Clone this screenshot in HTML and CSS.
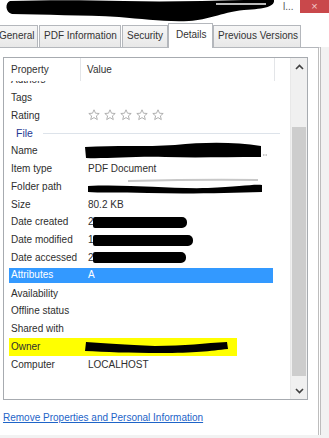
FILE: index.html
```html
<!DOCTYPE html>
<html lang="en">
<head>
    <meta charset="UTF-8">
    <title>Properties - Details</title>
    <link rel="stylesheet" href="styles.css">
</head>
<body>
    <div class="titlebar">
        <div class="title-text">
            <svg class="title-scribble" width="276" height="22" viewBox="0 0 276 22">
                <path d="M6 1 C40 0 80 0 120 1 C160 2 200 1 240 0 L270 0 C271 6 262 9 240 10 C215 13 205 20 185 21 C160 22 140 19 115 17 C80 15 40 15 8 14 C1 12 1 3 6 1 Z" fill="#000"/>
                <path d="M212 4 h50" stroke="#bbb" stroke-width="2"/>
            </svg>
        </div>
        <span class="title-rest">l...</span>
        <span class="close-btn">×</span>
    </div>

    <div class="tabs">
        <div class="tab tab-general">General</div>
        <div class="tab tab-pdf">PDF Information</div>
        <div class="tab tab-security">Security</div>
        <div class="tab tab-details active">Details</div>
        <div class="tab tab-previous">Previous Versions</div>
    </div>

    <div class="panel">
        <div class="listbox">
            <div class="list">
                <div class="list-header">
                    <div class="hcell hcell-prop">Property</div>
                    <div class="hcell hcell-value">Value</div>
                </div>
                <div class="viewport">
                    <div class="rows">
                        <div class="row"><span class="prop">Authors</span><span class="val"></span></div>
                        <div class="row"><span class="prop">Tags</span><span class="val"></span></div>
                        <div class="row">
                            <span class="prop">Rating</span>
                            <span class="val stars">
                                <svg width="80" height="12" viewBox="0 0 80 12">
                                    <g fill="none" stroke="#a8a8a8" stroke-width="0.9">
                                        <path d="M6 0.8 L7.5 4.2 L11.2 4.5 L8.4 6.9 L9.3 10.6 L6 8.6 L2.7 10.6 L3.6 6.9 L0.8 4.5 L4.5 4.2 Z"/>
                                        <path transform="translate(16 0)" d="M6 0.8 L7.5 4.2 L11.2 4.5 L8.4 6.9 L9.3 10.6 L6 8.6 L2.7 10.6 L3.6 6.9 L0.8 4.5 L4.5 4.2 Z"/>
                                        <path transform="translate(32 0)" d="M6 0.8 L7.5 4.2 L11.2 4.5 L8.4 6.9 L9.3 10.6 L6 8.6 L2.7 10.6 L3.6 6.9 L0.8 4.5 L4.5 4.2 Z"/>
                                        <path transform="translate(48 0)" d="M6 0.8 L7.5 4.2 L11.2 4.5 L8.4 6.9 L9.3 10.6 L6 8.6 L2.7 10.6 L3.6 6.9 L0.8 4.5 L4.5 4.2 Z"/>
                                        <path transform="translate(64 0)" d="M6 0.8 L7.5 4.2 L11.2 4.5 L8.4 6.9 L9.3 10.6 L6 8.6 L2.7 10.6 L3.6 6.9 L0.8 4.5 L4.5 4.2 Z"/>
                                    </g>
                                </svg>
                            </span>
                        </div>
                        <div class="group"><span class="group-name">File</span><span class="group-line"></span></div>
                        <div class="row">
                            <span class="prop">Name</span>
                            <span class="val">
                                <svg class="redact redact-name" width="182" height="18" viewBox="0 0 182 18">
                                    <path d="M0 5 C30 3 60 5 90 3 C120 0 150 0 176 4 L176 15 C140 15 110 16 80 15 C50 14 20 17 1 16 Z" fill="#000"/>
                                    <path d="M178 13 h1.5 M180.5 13 h1.5" stroke="#999" stroke-width="1"/>
                                </svg>
                            </span>
                        </div>
                        <div class="row"><span class="prop">Item type</span><span class="val">PDF Document</span></div>
                        <div class="row">
                            <span class="prop">Folder path</span>
                            <span class="val">
                                <svg class="redact redact-folder" width="178" height="18" viewBox="0 0 178 18">
                                    <path d="M40 4 C80 3 120 2 170 3" stroke="#c8c8c8" stroke-width="2" fill="none"/>
                                    <path d="M0 9 C40 7 80 12 120 11 C150 10 165 7 174 8 L174 15 C140 16 100 17 60 16 C30 15 10 16 0 15 Z" fill="#000"/>
                                </svg>
                            </span>
                        </div>
                        <div class="row"><span class="prop">Size</span><span class="val">80.2 KB</span></div>
                        <div class="row">
                            <span class="prop">Date created</span>
                            <span class="val">2<span class="bar bar-created"></span></span>
                        </div>
                        <div class="row">
                            <span class="prop">Date modified</span>
                            <span class="val">1<span class="bar bar-modified"></span></span>
                        </div>
                        <div class="row">
                            <span class="prop">Date accessed</span>
                            <span class="val">2<span class="bar bar-accessed"></span></span>
                        </div>
                        <div class="row selected"><span class="prop">Attributes</span><span class="val">A</span></div>
                        <div class="row"><span class="prop">Availability</span><span class="val"></span></div>
                        <div class="row"><span class="prop">Offline status</span><span class="val"></span></div>
                        <div class="row"><span class="prop">Shared with</span><span class="val"></span></div>
                        <div class="row owner">
                            <span class="prop">Owner</span>
                            <span class="val">
                                <svg class="redact redact-owner" width="146" height="18" viewBox="0 0 146 18">
                                    <path d="M1 4 C20 5 40 7 70 8 C100 8 120 5 142 4 L143 11 C125 13 110 15 75 15 C45 15 20 14 0 13 Z" fill="#000"/>
                                </svg>
                            </span>
                        </div>
                        <div class="row"><span class="prop">Computer</span><span class="val">LOCALHOST</span></div>
                    </div>
                </div>
            </div>
            <div class="scrollbar">
                <div class="arrow">
                    <svg width="9" height="6" viewBox="0 0 9 6"><path d="M1 5 L4.5 1.5 L8 5" fill="none" stroke="#404040" stroke-width="1.6"/></svg>
                </div>
                <div class="track">
                    <div class="thumb"></div>
                </div>
                <div class="arrow">
                    <svg width="9" height="6" viewBox="0 0 9 6"><path d="M1 1 L4.5 4.5 L8 1" fill="none" stroke="#404040" stroke-width="1.6"/></svg>
                </div>
            </div>
        </div>

        <a class="remove-link" href="#">Remove Properties and Personal Information</a>
    </div>
</body>
</html>
```

FILE: styles.css
```css
* {
    margin: 0;
    padding: 0;
    box-sizing: border-box;
}

html,
body {
    overflow: hidden;
}

body {
    background: #f2f2f2;
    font-family: 'Liberation Sans', Arial, sans-serif;
    font-size: 10px;
    color: #2e2e2e;
}

/* title bar */

.titlebar {
    height: 22px;
    display: grid;
    grid-template-columns: 283px 17px 29px;
    align-items: start;
    background: #fff;
}

.title-text {
    height: 22px;
    padding-left: 4px;
}

.title-scribble {
    display: block;
}

.title-rest {
    font-size: 10px;
    color: #555;
    line-height: 13px;
}

.close-btn {
    display: block;
    width: 29px;
    height: 13px;
    background: #c9484b;
    color: #f3c8c8;
    font-size: 11px;
    line-height: 12px;
    text-align: center;
}

/* tabs */

.tabs {
    height: 25px;
    display: flex;
    align-items: flex-end;
    margin-left: -6px;
    background: #fff;
}

.tab {
    height: 22px;
    line-height: 20px;
    padding: 0 4px;
    border: 1px solid #b4b7bc;
    border-bottom: none;
    background: linear-gradient(#f6f6f6, #e8e8e8);
    color: #333;
    margin-right: 1px;
    white-space: nowrap;
    flex-shrink: 0;
    overflow: hidden;
}

.tab-general { width: 44px; text-align: right; padding-right: 5px; }
.tab-pdf { width: 82px; }
.tab-security { width: 46px; }
.tab-previous { width: 88px; }

.tab.active {
    height: 25px;
    width: 45px;
    background: #fff;
    line-height: 22px;
    padding-left: 7px;
    margin: 0 0 -1px -1px;
    position: relative;
    z-index: 1;
}

/* panel */

.panel {
    width: 323px;
    height: 388px;
    margin-left: -2px;
    background: #fff;
    border-top: 1px solid #b4b7bc;
    border-right: 3px double #bdbdbd;
    padding: 9px 0 0 5px;
}

.listbox {
    width: 305px;
    height: 343px;
    border: 1px solid #a7abb0;
    display: flex;
}

.list {
    width: 286px;
    display: flex;
    flex-direction: column;
}

.list-header {
    height: 23px;
    display: flex;
    flex-shrink: 0;
}

.hcell {
    line-height: 23px;
    color: #333;
}

.hcell-prop {
    width: 77px;
    padding-left: 7px;
    border-right: 1px solid #e3e5e8;
}

.hcell-value {
    width: 194px;
    padding-left: 6px;
    border-right: 1px solid #e3e5e8;
}

.viewport {
    flex: 1;
    overflow: hidden;
}

.rows {
    margin-top: -10px;
    margin-left: 5px;
}

.row {
    width: 264px;
    height: 17.8px;
    display: flex;
    align-items: center;
    line-height: 17.8px;
}

.prop {
    width: 79px;
    padding-left: 2px;
    flex-shrink: 0;
    white-space: nowrap;
}

.val {
    display: flex;
    align-items: center;
    white-space: nowrap;
}

.stars svg {
    display: block;
}

.group {
    width: 271px;
    height: 17.8px;
    display: flex;
    align-items: center;
}

.group-name {
    padding-left: 7px;
    color: #1f3a93;
    font-size: 10.5px;
}

.group-line {
    flex: 1;
    height: 1px;
    margin-left: 10px;
    background: #dde3ea;
}

.redact {
    display: block;
    overflow: visible;
}

.redact-name {
    margin-left: -3px;
}

.redact-folder {
    margin-top: -2px;
}

.redact-owner {
    margin-left: -3px;
}

.bar {
    display: block;
    height: 11px;
    background: #000;
    border-radius: 2px 5px 5px 2px;
    margin-left: -1px;
}

.bar-created { width: 94px; }
.bar-modified { width: 100px; }
.bar-accessed { width: 93px; }

.row.selected {
    background: #3399ff;
    color: #fff;
    height: 15px;
    margin: 1px 0 1.8px;
}

.row.owner {
    background: linear-gradient(#ffff00, #ffff00) no-repeat;
    background-size: 228px 100%;
}

/* scrollbar */

.scrollbar {
    width: 17px;
    display: flex;
    flex-direction: column;
    background: #f0f0f0;
    border-left: 1px solid #e8e8e8;
}

.arrow {
    height: 17px;
    display: flex;
    align-items: center;
    justify-content: center;
}

.track {
    flex: 1;
    padding-top: 52px;
    padding-bottom: 6px;
    display: flex;
}

.thumb {
    flex: 1;
    margin: 0 1px;
    background: #cdcdcd;
}

.remove-link {
    display: inline-block;
    margin-top: 12px;
    color: #1e64c8;
    text-decoration: underline;
    font-size: 10px;
}
```
